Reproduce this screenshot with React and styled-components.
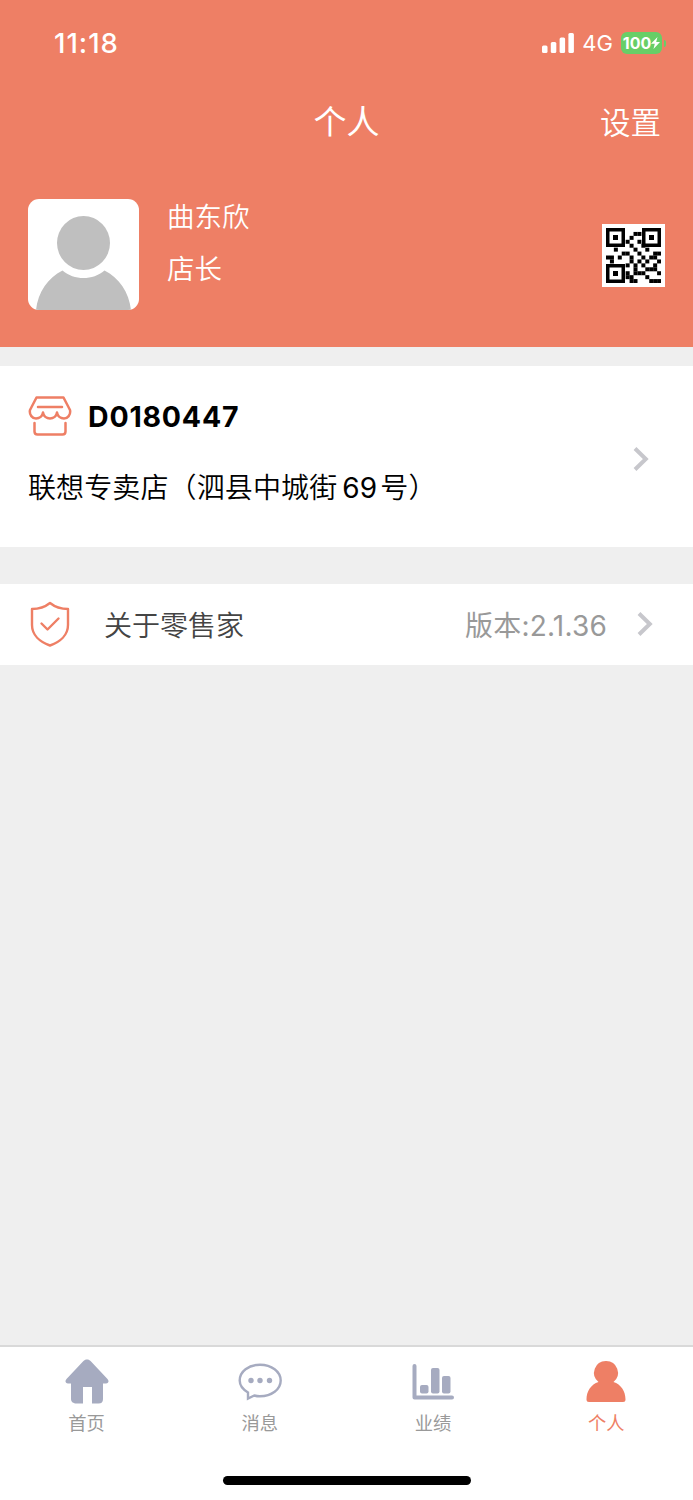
import styled, { createGlobalStyle } from 'styled-components';

const GlobalStyle = createGlobalStyle`
    * { box-sizing: border-box; }
    body {
        margin: 0;
        background: #efefef;
        font-family: Inter, "Noto Sans CJK SC", sans-serif;
    }
`;

const Page = styled.div`
    width: 693px;
    height: 1500px;
    display: flex;
    flex-direction: column;
    overflow: hidden;
    background: #efefef;
`;

const Hero = styled.header`
    height: 347px;
    background: #ee7f65;
    color: #fff;
`;

const StatusBar = styled.div`
    height: 86px;
    padding: 0 27px 0 54px;
    display: flex;
    align-items: center;
    justify-content: space-between;
`;

const Clock = styled.span`
    font-size: 27.5px;
    font-weight: 550;
    letter-spacing: 1px;
`;

const StatusIcons = styled.div`
    display: flex;
    align-items: center;
    gap: 8px;
    font-size: 22px;
`;

const Battery = styled.div`
    display: flex;
    align-items: center;
    gap: 2px;
`;

const BatteryBody = styled.div`
    width: 41px;
    height: 22px;
    border-radius: 6px;
    background: #68ce67;
    display: flex;
    align-items: center;
    justify-content: center;
    font-size: 16px;
    font-weight: 700;
    line-height: 22px;
`;

const BatteryTip = styled.div`
    width: 2px;
    height: 7px;
    border-radius: 0 2px 2px 0;
    background: #68ce67;
`;

const NavBar = styled.div`
    height: 70px;
    padding: 3px 32px 0;
    display: grid;
    grid-template-columns: 1fr auto 1fr;
    align-items: center;
`;

const Title = styled.h1`
    grid-column: 2;
    margin: 0 0 2px;
    font-size: 33px;
    font-weight: 400;
    line-height: 48px;
`;

const Setting = styled.span`
    justify-self: end;
    font-size: 30.5px;
    font-weight: 350;
    line-height: 48px;
`;

const Profile = styled.section`
    height: 191px;
    padding: 43px 28px 0;
    display: flex;
`;

const Avatar = styled.div`
    width: 111px;
    height: 111px;
    border-radius: 11px;
    overflow: hidden;
    background: #fff;
`;

const Names = styled.div`
    flex: 1;
    padding-left: 28px;
    font-size: 27.5px;
    font-weight: 350;
    line-height: 51.5px;
    margin-top: -7px;
`;

const QrBox = styled.div`
    width: 63px;
    height: 63px;
    margin-top: 25px;
    padding: 4px;
    background: #fff;
`;

const StoreCard = styled.section`
    height: 181px;
    margin-top: 19px;
    padding: 0 44px 0 28px;
    display: flex;
    align-items: center;
    justify-content: space-between;
    background: #fff;
    color: #000;
    & > svg {
        margin-top: 4px;
    }
`;

const StoreInfo = styled.div`
    height: 181px;
    padding-top: 28px;
`;

const StoreCode = styled.div`
    height: 44px;
    display: flex;
    align-items: center;
    gap: 16px;
    font-size: 28.5px;
    font-weight: 700;
    letter-spacing: 0.8px;
`;

const StoreName = styled.div`
    margin-top: 30px;
    font-size: 28px;
    font-weight: 350;
    line-height: 40px;
    letter-spacing: 0.12px;
    white-space: nowrap;
`;

const StoreNumber = styled.span`
    margin: 0 3px 0 5px;
    font-weight: 400;
`;

const AboutRow = styled.section`
    height: 81px;
    margin-top: 37px;
    padding: 0 40px 2px 30px;
    display: flex;
    align-items: center;
    background: #fff;
    color: #444;
    font-size: 28px;
`;

const AboutLabel = styled.span`
    flex: 1;
    padding-left: 34px;
    font-weight: 350;
`;

const Version = styled.span`
    margin-right: 30px;
    color: #999;
    font-size: 28px;
    font-weight: 370;
    letter-spacing: 0.2px;
`;

const TabBar = styled.nav`
    height: 155px;
    margin-top: auto;
    border-top: 2px solid #d9d9d9;
    background: #fff;
    display: flex;
    flex-direction: column;
    justify-content: space-between;
    align-items: center;
`;

const Tabs = styled.div`
    width: 100%;
    display: grid;
    grid-template-columns: repeat(4, 1fr);
`;

const Tab = styled.div`
    display: flex;
    flex-direction: column;
    align-items: center;
    padding-top: 11px;
    font-size: 18.3px;
    line-height: 26px;
    color: ${({ $active }) => ($active ? '#ee7f65' : '#999')};
    & > svg {
        margin-bottom: 4px;
    }
`;

const HomeIndicator = styled.div`
    width: 248px;
    height: 9px;
    margin-bottom: 15px;
    border-radius: 5px;
    background: #000;
`;

// data modules only, the three corner squares are drawn on top
const QR_ROWS = [
    '00000000000000',
    '00000001100000',
    '00000010000000',
    '00000100100000',
    '00000010010000',
    '00100001001000',
    '00001100100011',
    '11010010010110',
    '01000010101001',
    '00000101010010',
    '00000001001110',
    '00000101110001',
    '00000110001000',
    '00000011000111',
];

const QR_CORNERS = [[0, 0], [36, 0], [0, 36]];

const QrCode = () => (
    <svg width="55" height="55" viewBox="0 0 55 55">
        {QR_ROWS.map((row, y) =>
            [...row].map((cell, x) =>
                cell === '1' ? <rect key={`${x}-${y}`} x={x * 3.93} y={y * 3.93} width="4" height="4" /> : null
            )
        )}
        {QR_CORNERS.map(([x, y]) => (
            <g key={`${x}-${y}`}>
                <rect x={x + 1.75} y={y + 1.75} width="15.5" height="15.5" fill="none" stroke="#000" strokeWidth="3.5" />
                <rect x={x + 7} y={y + 7} width="5" height="5" />
            </g>
        ))}
    </svg>
);

const Chevron = () => (
    <svg width="16" height="26" viewBox="0 0 16 26" fill="none" stroke="#c7c7cc" strokeWidth="4">
        <path d="M2 2.5L12.8 13L2 23.5" />
    </svg>
);

const TABS = [
    {
        label: '首页',
        icon: (
            <path
                d="M22 1.5c1.5 0 2.7.6 3.8 1.7L42.5 21c1.9 2.2 1 4.5-1.5 4.5H38V41c0 3-1.5 4.5-4.5 4.5H27V29h-9v16.5h-6.5C8.5 45.5 6 44 6 41V25.5H3C.5 25.5-.4 23.2 1.5 21L18.2 3.2C19.3 2.1 20.5 1.5 22 1.5Z"
                fill="#a6abc0"
            />
        ),
    },
    {
        label: '消息',
        icon: (
            <g fill="#a6abc0">
                <path
                    d="M10 40.5V34.5C5 31.5 1.7 27.5 1.7 22.5C1.7 13.5 10.5 6.7 22 6.7S42.7 13.5 42.7 22.5S33.5 38.3 22 38.3C19.5 38.3 18 38 16.3 37.5Z"
                    fill="none"
                    stroke="#a6abc0"
                    strokeWidth="2.4"
                />
                <circle cx="13" cy="22.5" r="2.7" />
                <circle cx="22" cy="22.5" r="2.7" />
                <circle cx="31.5" cy="22.5" r="2.7" />
            </g>
        ),
    },
    {
        label: '业绩',
        icon: (
            <g fill="#a6abc0">
                <path d="M3.5 8V39.5H41" fill="none" stroke="#a6abc0" strokeWidth="4" strokeLinecap="round" strokeLinejoin="round" />
                <rect x="9" y="27" width="8.5" height="8.5" rx="2" />
                <rect x="20" y="10" width="8.5" height="25.5" rx="2" />
                <rect x="31" y="18" width="8.5" height="17.5" rx="2" />
            </g>
        ),
    },
    {
        label: '个人',
        active: true,
        icon: (
            <path
                d="M22 3a11.8 11.8 0 0 1 7.5 21C37 26.5 41.5 33 41.5 41.5Q41.5 44 39 44H5Q2.5 44 2.5 41.5C2.5 33 7 26.5 14.5 24A11.8 11.8 0 0 1 22 3Z"
                fill="#ee7f65"
            />
        ),
    },
];

const App = () => {
    return (
        <>
            <GlobalStyle />
            <Page>
                <Hero>
                    <StatusBar>
                        <Clock>11:18</Clock>
                        <StatusIcons>
                            <svg width="32" height="20" viewBox="0 0 32 20" fill="#fff">
                                <rect x="0" y="12.5" width="5.5" height="7.5" rx="1.5" />
                                <rect x="8.8" y="9" width="5.5" height="11" rx="1.5" />
                                <rect x="17.6" y="4.5" width="5.5" height="15.5" rx="1.5" />
                                <rect x="26.4" y="0" width="5.5" height="20" rx="1.5" />
                            </svg>
                            <span>4G</span>
                            <Battery>
                                <BatteryBody>
                                    100
                                    <svg width="9" height="12" viewBox="0 0 9 12" fill="#fff">
                                        <path d="M6.5 0L0 6.8H3.8L2.5 12L9 5H5.2Z" />
                                    </svg>
                                </BatteryBody>
                                <BatteryTip />
                            </Battery>
                        </StatusIcons>
                    </StatusBar>
                    <NavBar>
                        <Title>个人</Title>
                        <Setting>设置</Setting>
                    </NavBar>
                    <Profile>
                        <Avatar>
                            <svg width="111" height="111" viewBox="0 0 111 111" fill="#bfbfbf">
                                <ellipse cx="55.5" cy="44" rx="26.5" ry="27" />
                                <path d="M8 111C10 93 20 79 34.5 71.5C46 81.5 65 81.5 76.5 71.5C91 79 101 93 103 111Z" />
                            </svg>
                        </Avatar>
                        <Names>
                            <div>曲东欣</div>
                            <div>店长</div>
                        </Names>
                        <QrBox>
                            <QrCode />
                        </QrBox>
                    </Profile>
                </Hero>
                <StoreCard>
                    <StoreInfo>
                        <StoreCode>
                            <svg width="44" height="40" viewBox="0 0 44 40" fill="none" stroke="#ee7f65" strokeWidth="2.5" strokeLinecap="round" strokeLinejoin="round">
                                <path d="M8.5 1.5H35.5L42 14C43 19 39.5 22.5 36 22.5C32.5 22.5 29.5 20 29 16.5C28.5 20 25.5 22.5 22 22.5S15.5 20 15 16.5C14.5 20 11.5 22.5 8 22.5C4.5 22.5 1 19 2 14Z" />
                                <path d="M10 11H34M6.5 27V35.5Q6.5 38.5 9.5 38.5H34.5Q37.5 38.5 37.5 35.5V27" />
                            </svg>
                            D0180447
                        </StoreCode>
                        <StoreName>
                            联想专卖店（泗县中城街<StoreNumber>69</StoreNumber>号）
                        </StoreName>
                    </StoreInfo>
                    <Chevron />
                </StoreCard>
                <AboutRow>
                    <svg width="40" height="46" viewBox="0 0 40 46" fill="none" stroke="#ee7f65" strokeWidth="2.4" strokeLinejoin="round">
                        <path d="M20 2C15 6 9 8 2 8V24C2 34 10 41 20 44.5C30 41 38 34 38 24V8C31 8 25 6 20 2Z" />
                        <path d="M11.5 22.5L17.5 28.5L28.5 17.5" strokeLinecap="round" />
                    </svg>
                    <AboutLabel>关于零售家</AboutLabel>
                    <Version>版本:2.1.36</Version>
                    <Chevron />
                </AboutRow>
                <TabBar>
                    <Tabs>
                        {TABS.map((tab) => (
                            <Tab key={tab.label} $active={tab.active}>
                                <svg width="44" height="48" viewBox="0 0 44 48">
                                    {tab.icon}
                                </svg>
                                {tab.label}
                            </Tab>
                        ))}
                    </Tabs>
                    <HomeIndicator />
                </TabBar>
            </Page>
        </>
    );
};

export default App;
